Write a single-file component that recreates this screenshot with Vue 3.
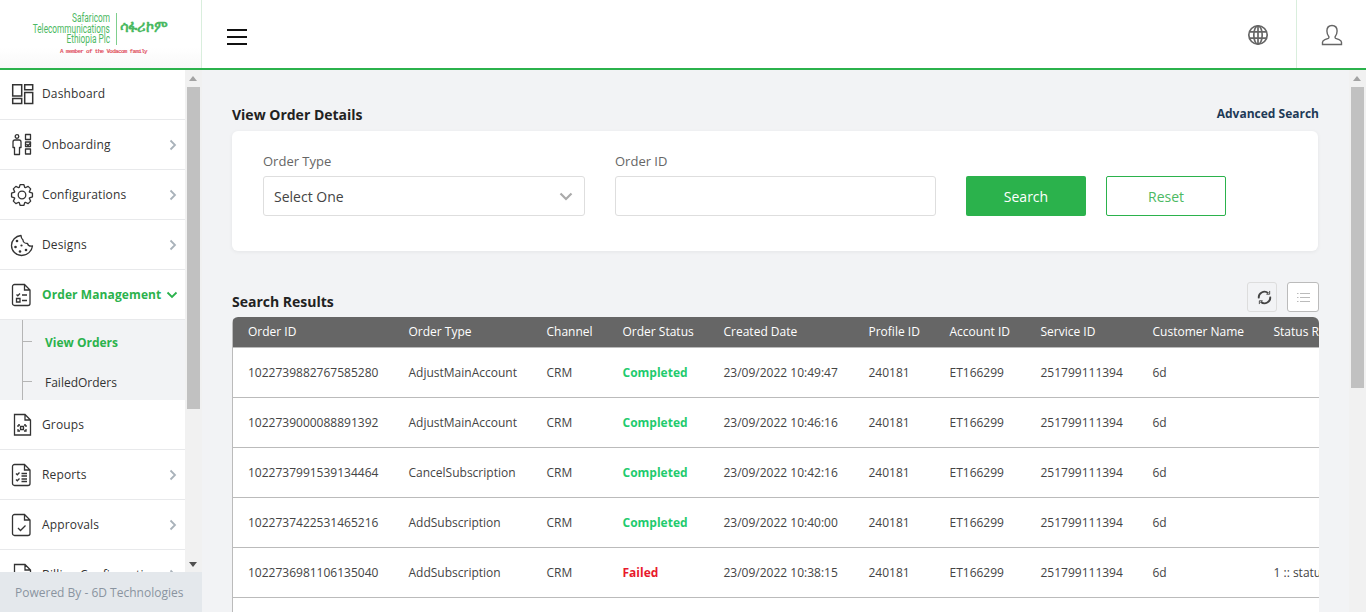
<script setup>
const menuTop = [
  { label: "Dashboard", icon: "dash", arrow: false },
  { label: "Onboarding", icon: "onboard", arrow: true },
  { label: "Configurations", icon: "gear", arrow: true },
  { label: "Designs", icon: "palette", arrow: true },
];
const menuBottom = [
  { label: "Groups", icon: "groups", arrow: false },
  { label: "Reports", icon: "reports", arrow: true },
  { label: "Approvals", icon: "approvals", arrow: true },
  { label: "Billing Configurations", icon: "billing", arrow: true },
];

const columns = [
  ["Order ID", 161],
  ["Order Type", 138],
  ["Channel", 76],
  ["Order Status", 101],
  ["Created Date", 145],
  ["Profile ID", 81],
  ["Account ID", 91],
  ["Service ID", 112],
  ["Customer Name", 121],
  ["Status Reason", 181],
];

const rows = [
  { id: "1022739882767585280", type: "AdjustMainAccount", status: "Completed", date: "23/09/2022 10:49:47", reason: "" },
  { id: "1022739000088891392", type: "AdjustMainAccount", status: "Completed", date: "23/09/2022 10:46:16", reason: "" },
  { id: "1022737991539134464", type: "CancelSubscription", status: "Completed", date: "23/09/2022 10:42:16", reason: "" },
  { id: "1022737422531465216", type: "AddSubscription", status: "Completed", date: "23/09/2022 10:40:00", reason: "" },
  { id: "1022736981106135040", type: "AddSubscription", status: "Failed", date: "23/09/2022 10:38:15", reason: "1 :: status failed" },
];

// 8 rounded cog teeth around the centre of the 24 box
const gearPath = () => {
  const pts = [];
  for (let i = 0; i < 8; i++) {
    const mid = (i * Math.PI) / 4;
    [[-0.36, 8], [-0.17, 10.6], [0.17, 10.6], [0.36, 8]].forEach(([d, r]) => {
      pts.push(`${(12 + r * Math.cos(mid + d)).toFixed(2)} ${(12 + r * Math.sin(mid + d)).toFixed(2)}`);
    });
  }
  return "M" + pts.join("L") + "z";
};
</script>

<template>
  <div class="app">
    <header class="topbar">
      <div class="logo">
        <div class="logo-main">
          <div class="logo-en">
            <span>Safaricom</span>
            <span>Telecommunications</span>
            <span>Ethiopia Plc</span>
          </div>
          <div class="logo-am">ሳፋሪኮም</div>
        </div>
        <div class="logo-tag">A member of the Vodacom family</div>
      </div>
      <div class="burger"><i></i><i></i><i></i></div>
      <div class="top-right">
        <svg class="globe" width="22" height="22" viewBox="0 0 22 22" fill="none" stroke="#666" stroke-width="1.7">
          <circle cx="11" cy="11" r="9.2" />
          <ellipse cx="11" cy="11" rx="4.2" ry="9.2" />
          <path d="M2.4 7.8h17.2M2.4 14.2h17.2M11 1.8v18.4" />
        </svg>
        <div class="user">
          <svg width="22" height="22" viewBox="0 0 22 22" fill="none" stroke="#666" stroke-width="1.4">
            <path d="M1.5 20.5v-2.2c0-1.3 1-2 2.4-2.6l3.4-1.3c.6-.3.8-.9.6-1.6-1.3-1.6-2-3.4-2-5.7C5.9 3.6 8 1.5 11 1.5s5.100 2.100 5.100 5.600c0 2.300-.7 4.100-2 5.700-.2.700 0 1.300.6 1.600l3.400 1.300c1.400.6 2.400 1.300 2.400 2.600v2.200z" />
          </svg>
        </div>
      </div>
    </header>

    <div class="body">
      <aside class="side">
        <div class="side-scroll">
          <nav class="menu">
            <div v-for="m in menuTop" :key="m.label" class="item">
              <span class="ico">
                <svg width="24" height="24" viewBox="0 0 24 24" fill="none" stroke="#333" stroke-width="1.3" stroke-linejoin="round">
                  <template v-if="m.icon === 'dash'">
                    <path stroke-width="1.5" stroke-linejoin="miter" d="M2.700 2.700h9v11.300h-9zM2.700 16.500h9v5h-9zM14.700 2.700h8v5h-8zM14.700 10.500h8v11h-8z" />
                  </template>
                  <template v-else-if="m.icon === 'onboard'">
                    <circle cx="7" cy="3.500" r="1.800" />
                    <path d="M3 9c0-1.200 1-2 2-2h4c1 0 2 .8 2 2v5.500H9.500v7h-5v-7H3zM15.500 1.500h5v5h-5zM15.500 9h5v4.500h-5zM15.500 16h5v5h-5zM16.500 11l1.500 1.500 3-3" />
                  </template>
                  <template v-else-if="m.icon === 'gear'">
                    <circle cx="12" cy="12" r="3.800" />
                    <path :d="gearPath()" />
                  </template>
                  <template v-else>
                    <path d="M11 2.500C5.500 3 1.500 7.500 1.500 12.500c0 5.500 4.500 10 10 10 5.800 0 10.500-4.500 11-9.500-2.500.5-4.500-.5-5-2.500-2.500 0-4.500-1.500-4.500-3.500-1.500-1.500-2-3-2-4.500z" />
                    <g fill="#333" stroke="none">
                      <circle cx="7" cy="8" r="1.300" /><circle cx="5.500" cy="14" r="1.300" /><circle cx="10" cy="18.500" r="1.300" />
                      <circle cx="16" cy="17" r="1.300" /><circle cx="11.500" cy="12.500" r="1.100" />
                    </g>
                  </template>
                </svg>
              </span>
              <span class="label">{{ m.label }}</span>
              <svg v-if="m.arrow" class="chev" width="8" height="12" viewBox="0 0 8 12" fill="none" stroke="#a9b2ba" stroke-width="1.800"><path d="M1.500 1.500 6 6l-4.500 4.500" /></svg>
            </div>

            <div class="item active">
              <span class="ico">
                <svg width="24" height="24" viewBox="0 0 24 24" fill="none" stroke="#333" stroke-width="1.300">
                  <path d="M4.500 1.500h10l5.500 5.500v13.500a2 2 0 0 1-2 2h-13.500a2 2 0 0 1-2-2v-17a2 2 0 0 1 2-2zM14.500 1.500v5.500h5.500" />
                  <path d="M6.500 11.500l1.300 1.300 2.200-2.300M12 12h5M12 17.500h5M6.500 15.500h3.500v3.500h-3.500z" />
                </svg>
              </span>
              <span class="label">Order Management</span>
              <svg class="chev down" width="12" height="8" viewBox="0 0 12 8" fill="none" stroke="#2bb24c" stroke-width="1.800"><path d="M1.500 1.500 6 6l4.500-4.500" /></svg>
            </div>
            <div class="sub">
              <div class="sub-item on">View Orders</div>
              <div class="sub-item">FailedOrders</div>
            </div>

            <div v-for="m in menuBottom" :key="m.label" class="item">
              <span class="ico">
                <svg width="24" height="24" viewBox="0 0 24 24" fill="none" stroke="#333" stroke-width="1.300">
                  <path d="M4.500 1.500h10.500l5.500 5.500v15h-16zM15 1.500v5.500h5.500" v-if="m.icon === 'groups' || m.icon === 'billing'" />
                  <path d="M4.500 1.500h10l5.500 5.500v13.500a2 2 0 0 1-2 2h-13.500a2 2 0 0 1-2-2v-17a2 2 0 0 1 2-2zM14.500 1.500v5.500h5.500" v-else />
                  <path v-if="m.icon === 'groups'" d="M8 12h2M14 12h2M8 12v2M16 12v2M8 16v2h2M16 16v2h-2M10.500 13.500h3v3h-3z" />
                  <path v-if="m.icon === 'reports'" d="M6 10.500l1.300 1.300 2.200-2.300M11.500 10.500h5.500M11.500 13h5.500M6 16.500l1.300 1.300 2.200-2.300M11.500 16h5.500M11.500 18.500h5.500" />
                  <path v-if="m.icon === 'approvals'" d="M8 15l2.500 2.500 5-5" />
                </svg>
              </span>
              <span class="label">{{ m.label }}</span>
              <svg v-if="m.arrow" class="chev" width="8" height="12" viewBox="0 0 8 12" fill="none" stroke="#a9b2ba" stroke-width="1.800"><path d="M1.500 1.500 6 6l-4.500 4.500" /></svg>
            </div>
          </nav>
          <div class="sbar short">
            <span class="up"></span>
            <span class="thumb"></span>
            <span class="dn"></span>
          </div>
        </div>
        <div class="powered">Powered By - 6D Technologies</div>
      </aside>

      <main class="main">
        <div class="content">
          <div class="title-row">
            <h2>View Order Details</h2>
            <a class="adv">Advanced Search</a>
          </div>
          <section class="card">
            <div class="field">
              <label>Order Type</label>
              <div class="control select">
                <span>Select One</span>
                <svg width="14" height="9" viewBox="0 0 14 9" fill="none" stroke="#aaa" stroke-width="2.200"><path d="M1.500 1.500 7 7l5.500-5.500" /></svg>
              </div>
            </div>
            <div class="field">
              <label>Order ID</label>
              <div class="control"></div>
            </div>
            <button class="btn primary">Search</button>
            <button class="btn ghost">Reset</button>
          </section>

          <div class="results-row">
            <h2>Search Results</h2>
            <div class="tools">
              <span class="tool grey">
                <svg width="15" height="15" viewBox="0 0 16 16" fill="none" stroke="#444" stroke-width="2">
                  <path d="M2 9a6 6 0 0 1 10-5.500M14 7a6 6 0 0 1-10 5.500" />
                  <path d="M13.500 1v3.500H10M2.500 15v-3.500H6" stroke-width="1" />
                </svg>
              </span>
              <span class="tool white">
                <svg width="13" height="11" viewBox="0 0 13 11" fill="none" stroke="#bbb" stroke-width="1.200">
                  <path d="M0 1.500h1.500M3 1.500h10M0 5.500h1.500M3 5.500h10M0 9.500h1.500M3 9.500h10" />
                </svg>
              </span>
            </div>
          </div>

          <div class="table-wrap">
            <table>
              <thead>
                <tr>
                  <th v-for="c in columns" :key="c[0]" :style="{ width: c[1] + 'px' }">{{ c[0] }}</th>
                </tr>
              </thead>
              <tbody>
                <tr v-for="r in rows" :key="r.id">
                  <td>{{ r.id }}</td>
                  <td>{{ r.type }}</td>
                  <td>CRM</td>
                  <td :class="r.status === 'Failed' ? 'failed' : 'done'">{{ r.status }}</td>
                  <td>{{ r.date }}</td>
                  <td>240181</td>
                  <td>ET166299</td>
                  <td>251799111394</td>
                  <td>6d</td>
                  <td>{{ r.reason }}</td>
                </tr>
                <tr><td colspan="10"></td></tr>
              </tbody>
            </table>
          </div>
        </div>
        <div class="sbar">
          <span class="up"></span>
          <span class="thumb"></span>
        </div>
      </main>
    </div>
  </div>
</template>

<style scoped>
.app {
  height: 612px;
  display: flex;
  flex-direction: column;
  overflow: hidden;
  font-family: "Open Sans", "Noto Sans", sans-serif;
  color: #333;
}

.topbar {
  height: 70px;
  flex: none;
  display: flex;
  align-items: center;
  background: #fff;
  border-bottom: 2px solid #2bb24c;
  box-sizing: border-box;
}
.logo {
  width: 202px;
  height: 68px;
  box-sizing: border-box;
  border-right: 1px solid #d9eedd;
  padding-top: 13px;
  background: linear-gradient(#fff 70%, #f8f8f8);
}
.logo-main {
  display: flex;
  margin-left: 32px;
}
.logo-en {
  width: 78px;
  height: 32px;
  display: flex;
  flex-direction: column;
  align-items: flex-end;
  border-right: 1px solid #7fcf8e;
  padding-right: 6px;
  font: 12px/10.600px Roboto, sans-serif;
  color: #4cb963;
}
.logo-en span {
  transform: scaleX(0.69);
  transform-origin: right center;
  white-space: nowrap;
}
.logo-am {
  margin-left: 3px;
  margin-top: 4px;
  font: bold 16px/20px "DejaVu Sans", sans-serif;
  color: #4cb963;
  white-space: nowrap;
  transform: scaleX(0.92);
  transform-origin: left center;
}
.logo-tag {
  margin: 3px 0 0 60px;
  font: bold 6px/7px "Liberation Mono", monospace;
  letter-spacing: -0.7px;
  color: #e0525f;
  white-space: nowrap;
}
.burger {
  margin: 6px 0 0 25px;
  width: 20px;
  display: flex;
  flex-direction: column;
  gap: 5px;
}
.burger i {
  display: block;
  height: 2px;
  background: #111;
}
.top-right {
  margin-left: auto;
  height: 68px;
  display: flex;
  align-items: center;
}
.globe {
  margin: 2px 27px 0 0;
}
.user {
  width: 70px;
  height: 68px;
  box-sizing: border-box;
  border-left: 1px solid #d9eedd;
  padding: 2px 0 0 24px;
  display: flex;
  align-items: center;
}

.body {
  flex: 1;
  min-height: 0;
  display: flex;
}

.side {
  width: 202px;
  flex: none;
  display: flex;
  flex-direction: column;
}
.side-scroll {
  flex: 1;
  min-height: 0;
  display: flex;
  overflow: hidden;
}
.menu {
  width: 185px;
  flex: none;
  background: #fff;
}
.item {
  height: 50px;
  box-sizing: border-box;
  border-bottom: 1px solid #e8e9eb;
  display: flex;
  align-items: center;
  padding: 0 8px 0 10px;
  font-size: 12px;
  letter-spacing: 0.15px;
  color: #333;
  white-space: nowrap;
}
.item:first-child {
  padding-bottom: 2px;
}
.ico {
  width: 32px;
  height: 24px;
  flex: none;
}
.ico svg {
  display: block;
}
.label {
  flex: 1;
}
.chev {
  flex: none;
}
.chev.down {
  margin-right: -1px;
}
.active .label {
  color: #2bb24c;
  font-weight: 700;
  letter-spacing: 0.1px;
}
.sub {
  height: 80px;
  background: #f2f3f5;
  position: relative;
}
.sub::before {
  content: "";
  position: absolute;
  left: 22px;
  top: 0;
  bottom: 0;
  width: 1px;
  background: #b5b5b5;
}
.sub-item {
  height: 40px;
  display: flex;
  align-items: center;
  padding-left: 45px;
  font-size: 12px;
  position: relative;
  top: 2px;
}
.sub-item::before {
  content: "";
  position: absolute;
  left: 22px;
  top: 19px;
  width: 10px;
  height: 1px;
  background: #b5b5b5;
}
.sub-item.on {
  color: #2bb24c;
  font-weight: 700;
}

.sbar {
  width: 17px;
  flex: none;
  background: #f1f1f1;
  display: flex;
  flex-direction: column;
  align-items: flex-start;
  position: relative;
}
.sbar .thumb {
  display: block;
  width: 13px;
  height: 301px;
  margin: 0 0 0 2px;
  background: #c1c1c1;
}
.sbar.short .thumb {
  height: 322px;
}
.sbar .up {
  display: block;
  width: 0;
  height: 0;
  margin: 6px 0 6px 4px;
  border: 4px solid transparent;
  border-top: 0;
  border-bottom: 5px solid #a3a3a3;
}
.sbar .dn {
  position: absolute;
  left: 4px;
  bottom: 5px;
  width: 0;
  height: 0;
  border: 4px solid transparent;
  border-bottom: 0;
  border-top: 5px solid #505050;
}

.powered {
  height: 40px;
  flex: none;
  background: #e4e8ec;
  color: #8a94a0;
  font-size: 12px;
  display: flex;
  align-items: center;
  padding-left: 15px;
}

.main {
  flex: 1;
  min-width: 0;
  display: flex;
  background: #f2f3f5;
}
.content {
  flex: 1;
  min-width: 0;
  padding: 36px 30px 0 30px;
  overflow: hidden;
}
h2 {
  margin: 0;
  font-size: 14px;
  line-height: 18px;
  font-weight: 700;
  color: #222;
}
.title-row {
  display: flex;
  justify-content: space-between;
  align-items: center;
  height: 18px;
}
.adv {
  font-size: 12px;
  font-weight: 700;
  color: #1e3a57;
  margin-bottom: 4px;
}
.card {
  margin: 7px 0 0;
  width: 1086px;
  height: 120px;
  box-sizing: border-box;
  background: #fff;
  border-radius: 6px;
  box-shadow: 0 1px 4px rgba(0, 0, 0, 0.06);
  padding: 21px 0 0 31px;
  display: flex;
  align-items: flex-start;
  gap: 30px;
}
.field {
  width: 322px;
}
.field + .field {
  width: 321px;
}
.field label {
  display: block;
  font-size: 13px;
  line-height: 18px;
  margin-bottom: 6px;
  color: #666;
}
.control {
  height: 40px;
  box-sizing: border-box;
  border: 1px solid #dedede;
  border-radius: 3px;
  background: #fff;
}
.select {
  display: flex;
  align-items: center;
  justify-content: space-between;
  padding: 0 11px 0 10px;
  font-size: 14px;
  color: #444;
}
.btn {
  width: 120px;
  height: 40px;
  margin-top: 24px;
  border-radius: 2px;
  font-family: inherit;
  font-size: 14px;
  box-sizing: border-box;
}
.primary {
  background: #2bb24c;
  border: 0;
  color: #fff;
}
.ghost {
  background: #fff;
  border: 1px solid #2bb24c;
  color: #4cb963;
  margin-left: -10px;
}
.results-row {
  margin-top: 31px;
  height: 30px;
  display: flex;
  justify-content: space-between;
  align-items: flex-end;
}
.results-row h2 {
  margin-bottom: 1px;
}
.tools {
  display: flex;
  gap: 10px;
  align-self: stretch;
}
.tool {
  height: 30px;
  box-sizing: border-box;
  border: 1px solid #ddd;
  border-radius: 3px;
  display: flex;
  align-items: center;
  justify-content: center;
}
.tool.grey {
  width: 30px;
  padding-left: 4px;
}
.tool.white {
  width: 32px;
  background: #fff;
  border-color: #bbb;
}
.table-wrap {
  margin-top: 5px;
  width: 1087px;
  overflow: hidden;
  border-radius: 6px 6px 0 0;
}
table {
  table-layout: fixed;
  border-collapse: collapse;
  width: 1207px;
  background: #fff;
  border-left: 1px solid #bbb;
  font-size: 12px;
}
th {
  height: 30px;
  padding: 0 0 0 15px;
  box-sizing: border-box;
  background: #666;
  color: #fff;
  font-weight: 400;
  text-align: left;
  white-space: nowrap;
  border-bottom: 1px solid #bbb;
}
td {
  height: 50px;
  padding: 0 0 0 15px;
  box-sizing: border-box;
  border-bottom: 1px solid #bbb;
  color: #444;
  white-space: nowrap;
  overflow: hidden;
}
.done {
  color: #1fcb6e;
  font-weight: 700;
}
.failed {
  color: #e8192c;
  font-weight: 700;
}
</style>
